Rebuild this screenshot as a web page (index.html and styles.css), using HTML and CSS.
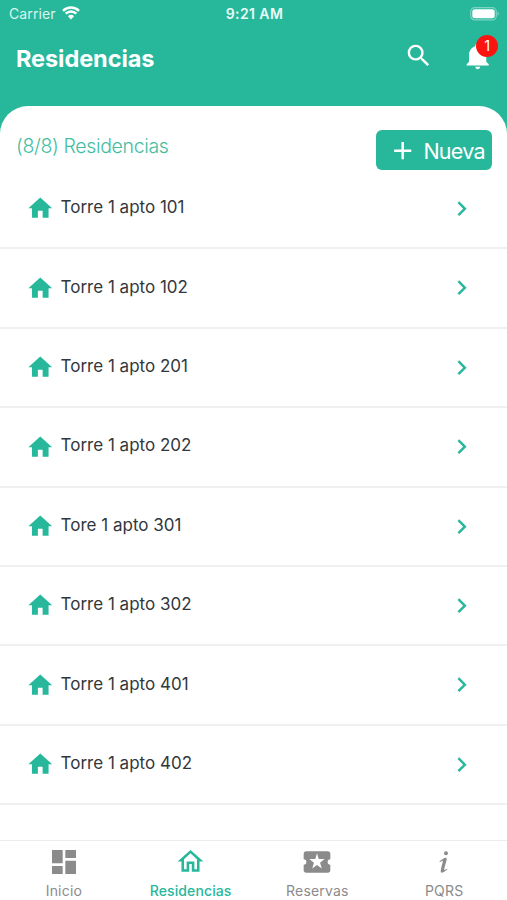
FILE: index.html
```html
<!DOCTYPE html>
<html lang="es">
<head>
<meta charset="utf-8">
<title>Residencias</title>
<link rel="stylesheet" href="styles.css">
</head>
<body>
<svg class="defs" aria-hidden="true">
  <symbol id="home" viewBox="0 0 24 24"><path d="M10 20v-6h4v6h5v-8h3L12 3 2 12h3v8z"/></symbol>
  <symbol id="chevron" viewBox="0 0 24 24"><path d="M8.59 16.58L13.17 12 8.59 7.41 10 6l6 6-6 6z"/></symbol>
</svg>
<div class="app">
  <div class="status">
    <div class="carrier"><span>Carrier</span>
      <svg class="wifi" viewBox="0 0 18 14"><path d="M9 13.4L5.9 10.2a4.5 4.5 0 0 1 6.2 0z" fill="#fff"/><path d="M3.7 7.7a7.6 7.6 0 0 1 10.6 0M1 4.8a11.5 11.5 0 0 1 16 0" fill="none" stroke="#fff" stroke-width="2.5"/></svg>
    </div>
    <div class="time">9:21 AM</div>
    <svg class="battery" viewBox="0 0 30 14"><rect x=".7" y=".7" width="25.6" height="12.2" rx="4" fill="none" stroke="#fff" stroke-opacity=".4" stroke-width="1.2"/><rect x="2.3" y="2.3" width="22.4" height="9" rx="2.5" fill="#fff"/><path d="M27.7 4.8q2 2 0 4z" fill="#fff" fill-opacity=".55"/></svg>
  </div>
  <header class="header">
    <h1>Residencias</h1>
    <svg class="icon search" viewBox="0 0 24 24"><path d="M9.5 3A6.5 6.5 0 0 1 16 9.5c0 1.61-.59 3.09-1.56 4.23l.27.27h.79l5 5-1.5 1.5-5-5v-.79l-.27-.27A6.52 6.52 0 0 1 9.5 16a6.5 6.5 0 0 1 0-13m0 2C7 5 5 7 5 9.5S7 14 9.5 14 14 12 14 9.5 12 5 9.5 5z"/></svg>
    <div class="bell">
      <svg class="icon" viewBox="0 0 24 24"><path d="M21 19v1H3v-1l2-2v-6c0-3.1 2.03-5.83 5-6.71V4a2 2 0 0 1 4 0v.29c2.97.88 5 3.61 5 6.71v6l2 2m-7 2a2 2 0 0 1-4 0"/></svg>
      <span class="badge">1</span>
    </div>
  </header>
  <main class="sheet">
    <div class="toolbar">
      <span class="count">(8/8) Residencias</span>
      <button class="new"><svg class="icon" viewBox="0 0 24 24"><path d="M19 13h-6v6h-2v-6H5v-2h6V5h2v6h6z"/></svg><span>Nueva</span></button>
    </div>
    <ul class="list">
      <li><svg class="house"><use href="#home"/></svg><span>Torre 1 apto 101</span><svg class="go"><use href="#chevron"/></svg></li>
      <li><svg class="house"><use href="#home"/></svg><span>Torre 1 apto 102</span><svg class="go"><use href="#chevron"/></svg></li>
      <li><svg class="house"><use href="#home"/></svg><span>Torre 1 apto 201</span><svg class="go"><use href="#chevron"/></svg></li>
      <li><svg class="house"><use href="#home"/></svg><span>Torre 1 apto 202</span><svg class="go"><use href="#chevron"/></svg></li>
      <li><svg class="house"><use href="#home"/></svg><span>Tore 1 apto 301</span><svg class="go"><use href="#chevron"/></svg></li>
      <li><svg class="house"><use href="#home"/></svg><span>Torre 1 apto 302</span><svg class="go"><use href="#chevron"/></svg></li>
      <li><svg class="house"><use href="#home"/></svg><span>Torre 1 apto 401</span><svg class="go"><use href="#chevron"/></svg></li>
      <li><svg class="house"><use href="#home"/></svg><span>Torre 1 apto 402</span><svg class="go"><use href="#chevron"/></svg></li>
    </ul>
  </main>
  <nav class="tabs">
    <div class="tab"><svg viewBox="0 0 24 24"><path d="M13 3v6h8V3m-8 18h8V11h-8M3 21h8v-6H3m0-2h8V3H3z"/></svg><span>Inicio</span></div>
    <div class="tab active"><svg viewBox="0 0 24 24"><path d="M12 5.69l5 4.5V18h-2v-6H9v6H7v-7.81l5-4.5M12 3L2 12h3v8h6v-6h2v6h6v-8h3"/></svg><span>Residencias</span></div>
    <div class="tab"><svg viewBox="0 0 24 24"><path fill-rule="evenodd" d="M20 12a2 2 0 0 0 2 2v4a2 2 0 0 1-2 2H4a2 2 0 0 1-2-2v-4a2 2 0 0 0 0-4V6a2 2 0 0 1 2-2h16a2 2 0 0 1 2 2v4a2 2 0 0 0-2 2zM15.58 16.8l-1.3-4.22 3.45-2.77-4.43-.15L12 5.5l-1.3 4.16-4.43.15 3.45 2.77-1.3 4.22L12 14.3z"/></svg><span>Reservas</span></div>
    <div class="tab"><svg viewBox="0 0 24 24"><path d="M13.5 4a1.5 1.5 0 1 0 0 3 1.5 1.5 0 0 0 0-3m-.36 4.77c-1.19.1-4.44 2.69-4.44 2.69-.2.15-.14.14.02.42.16.27.14.29.33.16.2-.13.53-.34 1.08-.68 2.12-1.36.34 1.78-.57 7.07-.36 2.62 2 1.27 2.61.87.6-.39 2.21-1.5 2.37-1.61.22-.15.06-.27-.11-.52-.12-.17-.24-.05-.24-.05-.65.43-1.84 1.33-2 .76-.19-.57 1.03-4.48 1.7-7.17.11-.64.41-2.04-.75-1.94z"/></svg><span>PQRS</span></div>
  </nav>
</div>
</body>
</html>
```
FILE: styles.css
```css
* { box-sizing: border-box; }
body { margin: 0; font-family: Inter, "Liberation Sans", sans-serif; }
.defs { position: absolute; width: 0; height: 0; }
svg { display: block; fill: currentColor; flex: none; }
.app { width: 507px; height: 900px; display: flex; flex-direction: column; background: linear-gradient(#27b89c 160px, #fff 160px); overflow: hidden; }
.status { height: 27px; display: grid; grid-template-columns: 1fr auto 1fr; align-items: center; padding: 0 7px 0 9px; color: #fff; font-size: 14px; }
.carrier { display: flex; align-items: center; gap: 6px; color: #dcf5ef; letter-spacing: .1px; }
.wifi { width: 18px; height: 14px; margin-top: -1px; }
.time { font-weight: 600; font-size: 14px; letter-spacing: .4px; color: #e9faf6; }
.battery { width: 30px; height: 14px; justify-self: end; }
.header { height: 79px; display: flex; align-items: flex-start; padding: 14px 15px 0 16px; color: #fff; }
h1 { margin: 3px auto 0 0; font-size: 23.5px; line-height: 30px; font-weight: 700; letter-spacing: -.07px; }
.icon { width: 29.4px; height: 29.4px; }
.bell { position: relative; margin-left: 29px; }
.badge { position: absolute; left: 13.5px; top: -6px; width: 22px; height: 22px; border-radius: 50%; background: #fb1410; font-size: 14.5px; line-height: 22px; text-align: center; }
.sheet { flex: 1; background: #fff; border-radius: 28px 28px 0 0; }
.toolbar { height: 64px; display: flex; align-items: flex-start; justify-content: space-between; padding: 24px 15px 0 16px; }
.count { color: #45bda0; font-size: 19.5px; line-height: 32px; font-weight: 300; letter-spacing: -.35px; }
.new { width: 116px; height: 40px; display: flex; align-items: center; gap: 6px; padding: 2px 0 0 12px; border: 0; border-radius: 6px; background: #27b89c; color: #fff; font-family: inherit; font-size: 21.5px; letter-spacing: -.75px; }
.list { margin: 0; padding: 0; list-style: none; }
.list li { height: 79.4px; display: flex; align-items: center; padding: 0 31px 0 25.6px; border-bottom: 2px solid #f0f0f0; color: #32373d; font-size: 17px; }
.list span { flex: 1; margin: -3px 0 0 6.5px; }
.house, .go { color: #27b89c; }
.house { width: 28.5px; height: 28.5px; }
.go { width: 29.4px; height: 29.4px; }
.tabs { height: 60px; display: grid; grid-template-columns: repeat(4, 1fr); border-top: 1px solid #ececec; background: #fff; color: #8b8b8b; font-size: 14px; }
.tab { display: flex; flex-direction: column; align-items: center; padding: 5px 0 0 1px; letter-spacing: .2px; }
.tab svg { width: 32px; height: 32px; }
.tab span { margin-top: 4px; line-height: 18px; }
.active { color: #27b89c; }
.active svg { width: 31px; height: 31px; margin-bottom: 1px; }
.active span { font-weight: 500; letter-spacing: .1px; }
```
